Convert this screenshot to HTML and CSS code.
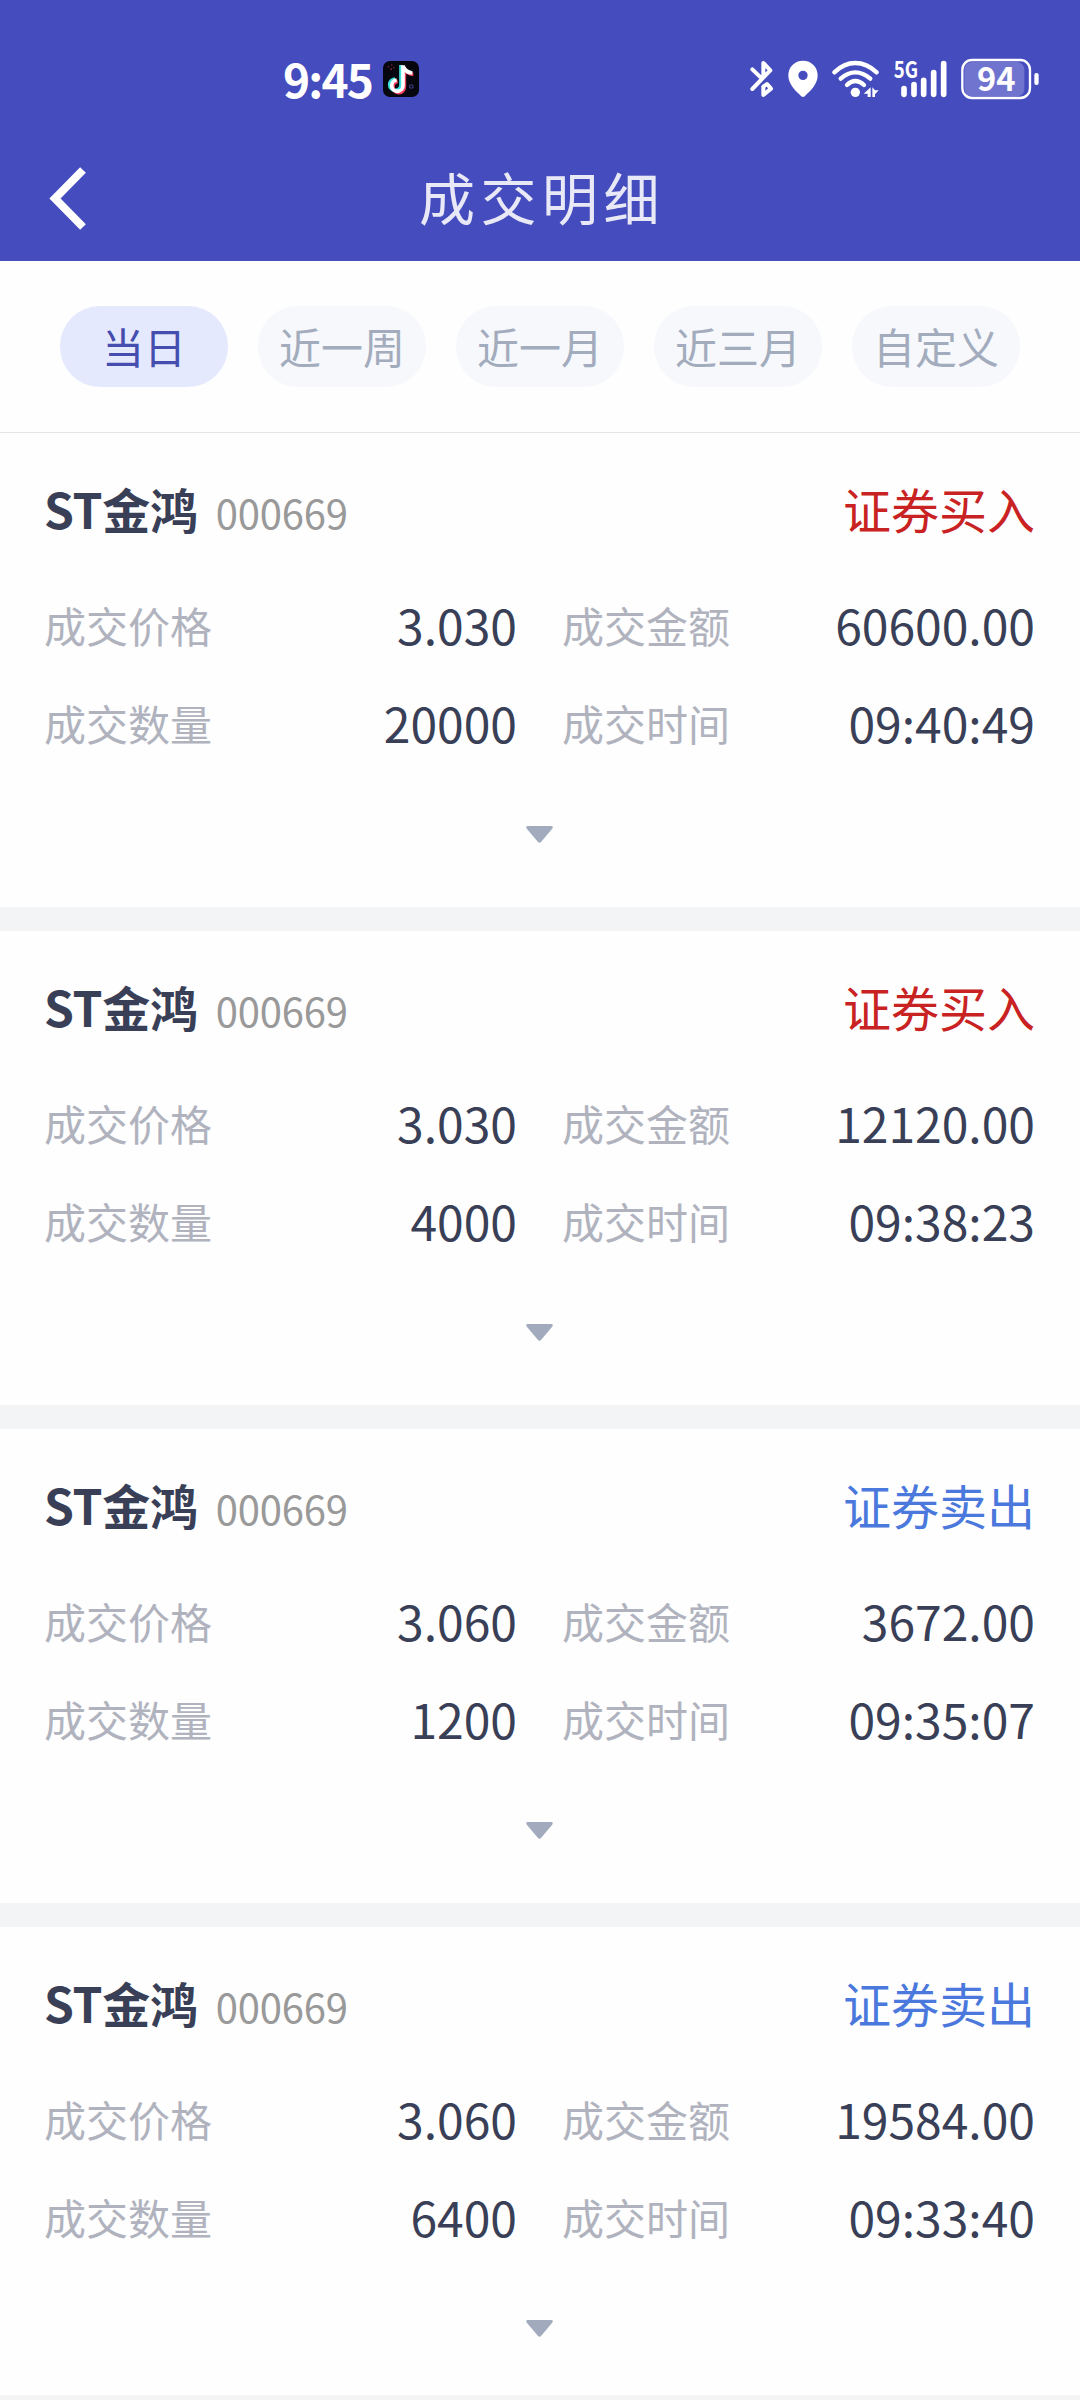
FILE: index.html
```html
<!DOCTYPE html>
<html lang="zh-CN">
<head>
  <meta charset="UTF-8">
  <meta name="viewport" content="width=device-width, initial-scale=1.0">
  <title>成交明细</title>
  <link rel="stylesheet" href="styles.css">
</head>
<body>

  <div class="header">
    <!-- 状态栏 -->
    <div class="statusbar">
      <span class="time">9:45</span>
      <svg class="app-icon" viewBox="0 0 108 108" width="36" height="36">
        <rect width="108" height="108" rx="21" fill="#06060f"/>
        <g fill="none" stroke-width="11">
          <path d="M56 13V74A17 17 0 1 1 38 55M56 15Q62 33 84 35" stroke="#3fe0dc" transform="translate(-2 -1)"/>
          <path d="M62 16V76A17 17 0 1 1 42 59M62 18Q69 37 89 38" stroke="#f0405c" transform="translate(2 2)"/>
          <path d="M60 13V75A17 17 0 1 1 41 57M60 15Q67 34 88 36" stroke="#fff"/>
        </g>
        <g fill="#7d2138">
          <rect x="14" y="15" width="4" height="4"/><rect x="24" y="10" width="4" height="4"/>
          <rect x="22" y="22" width="5" height="5"/><rect x="30" y="18" width="4" height="4"/>
        </g>
        <path d="M80 72h10v9H80z" fill="none" stroke="#3d3c86" stroke-width="3"/>
      </svg>

      <div class="status-icons">
        <svg viewBox="87 57 81 120" width="27" height="40">
          <path d="M97 88L126 116M97 147L151 91L130 69V106M130 140V165L153 146L141 132L130 140" fill="none" stroke="#fff" stroke-width="12" stroke-linecap="round" stroke-linejoin="round"/>
        </svg>
        <svg viewBox="204 57 93 120" width="31" height="40">
          <path fill="#fff" fill-rule="evenodd" d="M249 62C224 62 205 81 205 106C205 133 226 152 243 168Q249 174 255 168C272 152 293 133 293 106C293 81 274 62 249 62ZM249 92A14 14 0 1 1 249 120A14 14 0 1 1 249 92Z"/>
        </svg>
        <svg viewBox="333 57 150 120" width="50" height="40">
          <g fill="none" stroke="#fff" stroke-width="13" stroke-linecap="round">
            <path d="M343 97Q372 69 406 69T470 97"/>
            <path d="M362 116Q383 97 406 97T451 116"/>
            <path d="M381 135Q393 123 406 123T432 135"/>
          </g>
          <circle cx="406" cy="157" r="14" fill="#fff"/>
          <path d="M452 142V171H443V161H431ZM457 142V171H465V163L476 151L465 151Z" fill="#fff"/>
        </svg>
        <svg viewBox="519 57 165 120" width="55" height="40">
          <text class="net" x="521" y="115" textLength="73" lengthAdjust="spacingAndGlyphs">5G</text>
          <path d="M552 146V163M582 134V163M611 121V163M641 98V163M671 71V163" stroke="#fff" stroke-width="17" stroke-linecap="round"/>
        </svg>
        <svg viewBox="720 57 240 120" width="80" height="40">
          <rect x="733" y="66" width="180" height="103" rx="22" fill="#7074cf"/>
          <rect x="727" y="60" width="203" height="114" rx="29" fill="none" stroke="#fff" stroke-width="7"/>
          <rect x="943" y="99" width="13" height="36" rx="6" fill="#fff"/>
          <text class="level" x="829" y="153" text-anchor="middle">94</text>
        </svg>
      </div>
    </div>

    <!-- 标题栏 -->
    <div class="navbar">
      <svg class="back" viewBox="0 0 37 63" width="37" height="63">
        <path d="M34 3L6 31.500L34 60" fill="none" stroke="#fff" stroke-width="8"/>
      </svg>
      <h1>成交明细</h1>
    </div>
  </div>

  <!-- 日期筛选 -->
  <div class="tabs">
    <a class="tab active">当日</a>
    <a class="tab">近一周</a>
    <a class="tab">近一月</a>
    <a class="tab">近三月</a>
    <a class="tab">自定义</a>
  </div>

  <!-- 成交列表 -->
  <div class="list">
    <div class="card">
      <div class="card-head">
        <span class="name">ST金鸿</span>
        <span class="code">000669</span>
        <span class="side buy">证券买入</span>
      </div>
      <div class="fields">
        <div class="field"><span class="label">成交价格</span><span class="value">3.030</span></div>
        <div class="field"><span class="label">成交金额</span><span class="value">60600.00</span></div>
        <div class="field"><span class="label">成交数量</span><span class="value">20000</span></div>
        <div class="field"><span class="label">成交时间</span><span class="value">09:40:49</span></div>
      </div>
      <svg class="arrow" viewBox="0 0 27 17" width="27" height="17"><path d="M2 0H25Q28 0 26 3L15 16Q13.500 17.500 12 16L1 3Q-1 0 2 0Z"/></svg>
    </div>

    <div class="card">
      <div class="card-head">
        <span class="name">ST金鸿</span>
        <span class="code">000669</span>
        <span class="side buy">证券买入</span>
      </div>
      <div class="fields">
        <div class="field"><span class="label">成交价格</span><span class="value">3.030</span></div>
        <div class="field"><span class="label">成交金额</span><span class="value">12120.00</span></div>
        <div class="field"><span class="label">成交数量</span><span class="value">4000</span></div>
        <div class="field"><span class="label">成交时间</span><span class="value">09:38:23</span></div>
      </div>
      <svg class="arrow" viewBox="0 0 27 17" width="27" height="17"><path d="M2 0H25Q28 0 26 3L15 16Q13.500 17.500 12 16L1 3Q-1 0 2 0Z"/></svg>
    </div>

    <div class="card">
      <div class="card-head">
        <span class="name">ST金鸿</span>
        <span class="code">000669</span>
        <span class="side sell">证券卖出</span>
      </div>
      <div class="fields">
        <div class="field"><span class="label">成交价格</span><span class="value">3.060</span></div>
        <div class="field"><span class="label">成交金额</span><span class="value">3672.00</span></div>
        <div class="field"><span class="label">成交数量</span><span class="value">1200</span></div>
        <div class="field"><span class="label">成交时间</span><span class="value">09:35:07</span></div>
      </div>
      <svg class="arrow" viewBox="0 0 27 17" width="27" height="17"><path d="M2 0H25Q28 0 26 3L15 16Q13.500 17.500 12 16L1 3Q-1 0 2 0Z"/></svg>
    </div>

    <div class="card">
      <div class="card-head">
        <span class="name">ST金鸿</span>
        <span class="code">000669</span>
        <span class="side sell">证券卖出</span>
      </div>
      <div class="fields">
        <div class="field"><span class="label">成交价格</span><span class="value">3.060</span></div>
        <div class="field"><span class="label">成交金额</span><span class="value">19584.00</span></div>
        <div class="field"><span class="label">成交数量</span><span class="value">6400</span></div>
        <div class="field"><span class="label">成交时间</span><span class="value">09:33:40</span></div>
      </div>
      <svg class="arrow" viewBox="0 0 27 17" width="27" height="17"><path d="M2 0H25Q28 0 26 3L15 16Q13.500 17.500 12 16L1 3Q-1 0 2 0Z"/></svg>
    </div>
  </div>

  <div class="bottom-bar"></div>

</body>
</html>
```
FILE: styles.css
```css
* {
  box-sizing: border-box;
}
body {
  margin: 0;
  height: 2400px;
  overflow: hidden;
  background-color: #fefefe;
  color: #393f56;
  font-family: "Noto Sans CJK SC", sans-serif;
}
svg {
  display: block;
  flex-shrink: 0;
  overflow: visible;
}

/* 顶部 */
.header {
  height: 261px;
  background-color: #454cbe;
  color: #fff;
}
.statusbar {
  display: flex;
  align-items: center;
  height: 135px;
  padding: 23px 40px 0 283px;
}
.time {
  width: 100px;
  font-size: 46px;
  font-weight: 700;
  line-height: 60px;
  letter-spacing: -1.8px;
  padding-bottom: 2px;
}
.status-icons {
  display: flex;
  gap: 12px;
  margin-left: auto;
}
.net {
  fill: #fff;
  font-size: 69px;
  font-weight: 700;
}
.level {
  fill: #fff;
  font-size: 98px;
  font-weight: 700;
}
.navbar {
  display: grid;
  grid-template-columns: 37px 1fr 37px;
  align-items: center;
  height: 126px;
  padding: 0 49px;
}
.navbar h1 {
  margin: 0;
  padding: 0 0 5px 4px;
  font-size: 56px;
  font-weight: 400;
  line-height: 80px;
  letter-spacing: 5.5px;
  text-align: center;
  color: #e8e8f6;
}

/* 日期筛选 */
.tabs {
  display: flex;
  gap: 30px;
  padding: 45px 60px;
  border-bottom: 1px solid #e4e4e6;
}
.tab {
  width: 168px;
  height: 81px;
  border-radius: 40px;
  background-color: #f6f8fc;
  color: #a3acbd;
  font-size: 42px;
  line-height: 79px;
  text-align: center;
}
.tab.active {
  background-color: #e5e9fe;
  color: #454eae;
}

/* 成交列表 */
.card {
  padding: 41px 45px 64px 44px;
  border-bottom: 24px solid #f3f4f6;
  height: 498px;
}
.card-head {
  display: flex;
  align-items: baseline;
  height: 68px;
  line-height: 68px;
  margin-bottom: 33px;
}
.name {
  font-size: 48px;
  font-weight: 700;
  letter-spacing: -0.3px;
}
.code {
  margin-left: 18px;
  font-size: 40px;
  letter-spacing: -0.2px;
  color: #999;
}
.side {
  margin-left: auto;
  font-size: 48px;
}
.buy {
  color: #c92222;
}
.sell {
  color: #4a78dc;
}
.fields {
  display: grid;
  grid-template-columns: 1fr 1fr;
  column-gap: 45px;
}
.field {
  display: flex;
  justify-content: space-between;
  align-items: center;
  height: 98px;
}
.label {
  font-size: 42px;
  color: #b0b3be;
}
.value {
  font-size: 48px;
}
.arrow {
  margin: 55px auto 0;
  fill: #a1abbd;
}

.bottom-bar {
  position: fixed;
  left: 0;
  right: 0;
  bottom: 0;
  height: 5px;
  background-color: #f4f4f4;
}
```
